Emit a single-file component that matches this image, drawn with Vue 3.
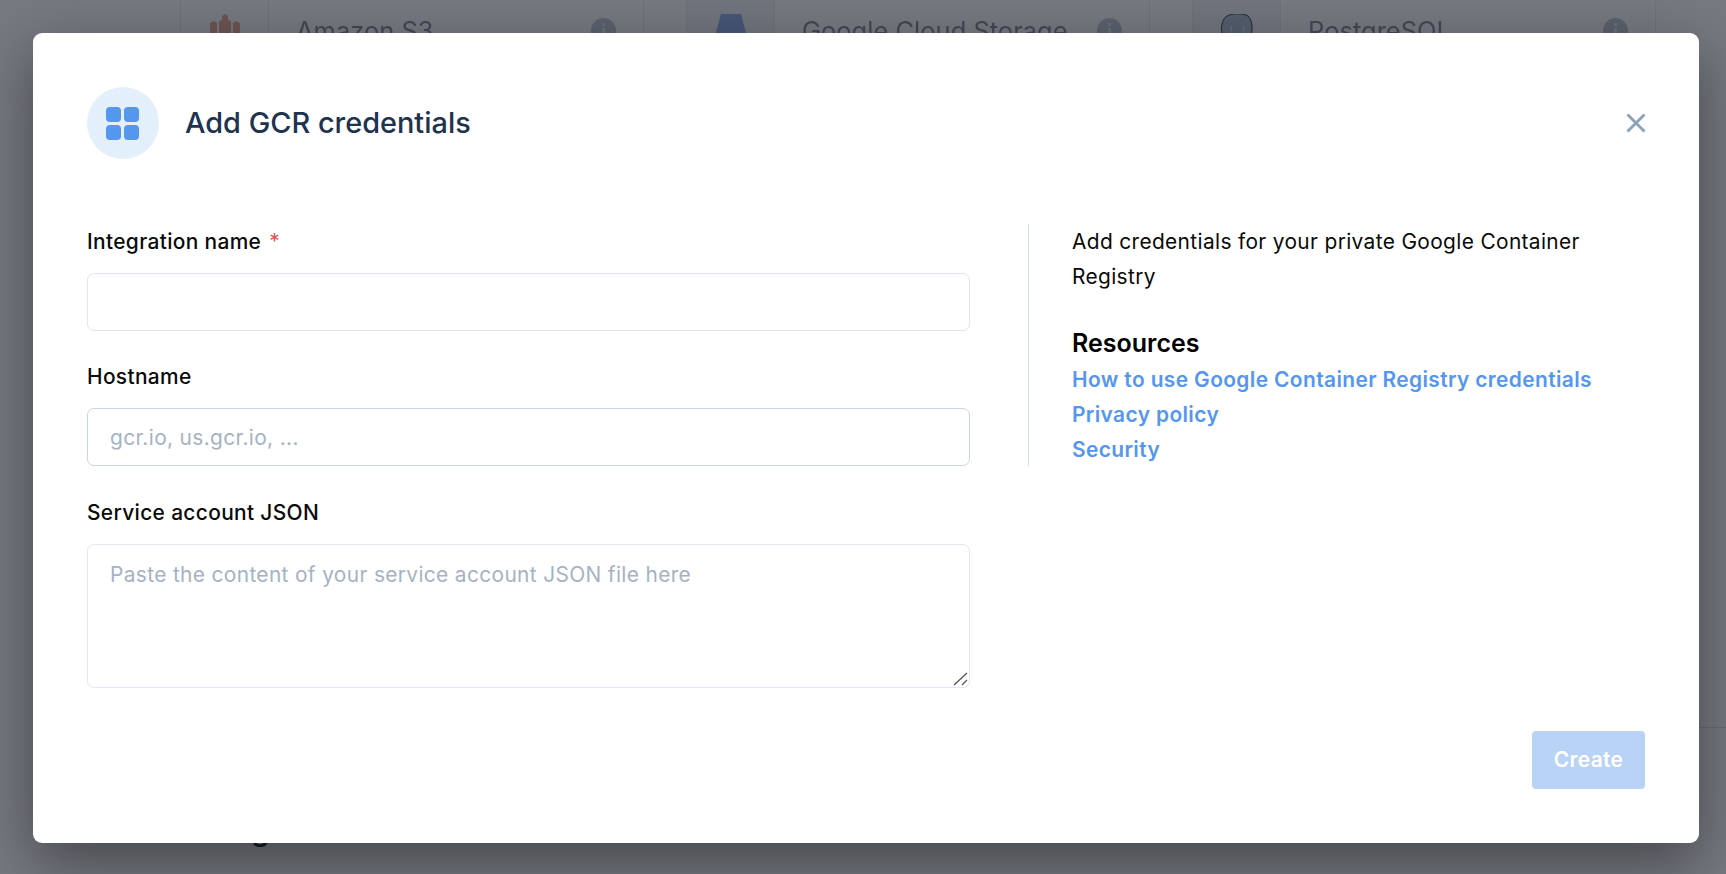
<script setup>
const cards = [
  { name: 'Amazon S3', kind: 's3' },
  { name: 'Google Cloud Storage', kind: 'gcs' },
  { name: 'PostgreSQL', kind: 'pg' }
]
</script>

<template>
  <div class="page">
    <div class="cards">
      <div v-for="c in cards" :key="c.name" class="card">
        <div class="card-icon" :class="c.kind">
          <svg v-if="c.kind === 's3'" width="30" height="44" viewBox="0 0 30 44">
            <path d="M0 9l4-2 3 2v26l-7-3zM30 9l-4-2-3 2v26l7-3zM9 7l3-1V2l3-2 3 2v4l3 1v30l-6 6-6-6z" fill="#e9a48c" />
          </svg>
          <svg v-else-if="c.kind === 'gcs'" width="36" height="44" viewBox="0 0 36 44">
            <path d="M8 0h20l8 30v14H0V30z" fill="#8aa9ea" />
            <rect x="12" y="28" width="12" height="5" rx="1" fill="#e8eefc" />
          </svg>
          <svg v-else width="36" height="44" viewBox="0 0 36 44">
            <path d="M8 2c6-3 16-3 21 0 5 4 5 16 2 24-2 6-4 14-9 14-3 0-3-4-4-8-2 4-5 6-8 3C5 30 1 18 3 10c1-4 2-6 5-8z" fill="#a9bbd0" stroke="#333" stroke-width="1" />
            <path d="M13 12c-2 6-1 12 1 18M24 12c2 6 1 12-1 16" fill="none" stroke="#eee" stroke-width="1" />
          </svg>
        </div>
        <div class="card-name">{{ c.name }}</div>
        <div class="card-info"><span class="i-dot"></span><span class="i-bar"></span></div>
      </div>
    </div>
    <div class="bg-rule"></div>
    <h2 class="bg-heading">Catalog</h2>

    <div class="overlay">
      <div class="modal">
        <header class="head">
          <div class="badge">
            <svg class="badge-icon" width="33" height="33" viewBox="0 0 33 33" fill="#5596ee">
              <rect x="0" y="0" width="15" height="15" rx="4" />
              <rect x="18" y="0" width="15" height="15" rx="4" />
              <rect x="0" y="18" width="15" height="15" rx="4" />
              <rect x="18" y="18" width="15" height="15" rx="4" />
            </svg>
          </div>
          <h1 class="title">Add GCR credentials</h1>
          <svg class="close" width="20" height="20" viewBox="0 0 20 20" fill="none" stroke="#8fa3b8" stroke-width="3" stroke-linecap="butt">
            <path d="M1.5 1.5l17 17M18.5 1.5l-17 17" />
          </svg>
        </header>

        <div class="body">
          <form class="form">
            <label class="label">Integration name <span class="req">*</span></label>
            <input class="field f1" type="text" />
            <label class="label">Hostname</label>
            <input class="field f2" type="text" placeholder="gcr.io, us.gcr.io, ..." />
            <label class="label">Service account JSON</label>
            <div class="area-wrap">
              <textarea class="field area" placeholder="Paste the content of your service account JSON file here"></textarea>
              <svg class="grip" width="15" height="14" viewBox="0 0 15 14" fill="none" stroke="#555" stroke-width="1.3">
                <path d="M1 13L14 1M9 13l5-5" />
              </svg>
            </div>
          </form>
          <aside class="side">
            <p class="intro">Add credentials for your private Google Container Registry</p>
            <h3 class="res">Resources</h3>
            <a class="link">How to use Google Container Registry credentials</a>
            <a class="link">Privacy policy</a>
            <a class="link">Security</a>
          </aside>
        </div>

        <footer class="foot">
          <button class="create" type="button" disabled>Create</button>
        </footer>
      </div>
    </div>
  </div>
</template>

<style scoped>
.page {
  position: relative;
  height: 874px;
  overflow: hidden;
  background: #fff;
  font-family: Inter, "Liberation Sans", sans-serif;
}
.cards {
  display: grid;
  grid-template-columns: repeat(3, 464px);
  gap: 42px;
  margin: -30px 0 0 180px;
  filter: blur(0.7px);
}
.card {
  display: flex;
  align-items: center;
  height: 120px;
  border: 1px solid #e8edf2;
  box-sizing: border-box;
}
.card-icon {
  width: 87px;
  align-self: stretch;
  display: flex;
  align-items: center;
  justify-content: center;
  border-right: 1px solid #e8edf2;
  flex: none;
}
.card-icon svg { margin-top: 12px; }
.card-icon.gcs,
.card-icon.pg { background: #f0f4f9; }
.card-name {
  flex: 1;
  margin-left: 27px;
  font-size: 25.5px;
  color: #7b8596;
}
.card-info {
  position: relative;
  width: 25px;
  height: 25px;
  border-radius: 50%;
  background: #bcc6d3;
  margin-right: 27px;
}
.i-dot {
  position: absolute;
  left: 11px;
  top: 5px;
  width: 3px;
  height: 3px;
  background: #e2e8f0;
}
.i-bar {
  position: absolute;
  left: 11px;
  top: 10px;
  width: 3px;
  height: 9px;
  background: #e2e8f0;
}
.bg-rule {
  margin: 637px 0 0 180px;
  border-top: 1px solid #dde3ea;
}
.bg-heading {
  margin: 85px 0 0 161px;
  font-size: 29px;
  font-weight: 600;
  color: #1a202c;
  line-height: 36px;
}
.overlay {
  position: absolute;
  inset: 0;
  box-sizing: border-box;
  padding: 33px 27px 31px 33px;
  display: flex;
  background: rgba(26, 32, 44, 0.6);
}
.modal {
  flex: 1;
  display: flex;
  flex-direction: column;
  box-sizing: border-box;
  padding: 54px;
  background: #fff;
  border-radius: 9px;
  box-shadow: 0 20px 60px rgba(0, 0, 0, 0.42);
}
.head {
  display: flex;
  align-items: center;
  height: 72px;
  flex: none;
}
.badge {
  width: 72px;
  height: 72px;
  border-radius: 50%;
  background: #e3effb;
  display: flex;
  align-items: center;
  justify-content: center;
  flex: none;
}
.badge-icon { margin: 0 1px 0 0; }
.title {
  margin: 0 0 2px 26px;
  flex: 1;
  font-size: 28.9px;
  font-weight: 450;
  color: #1e334f;
}
.close { flex: none; margin-right: -1px; }
.body {
  display: flex;
  margin-top: 65px;
}
.form {
  width: 883px;
  margin-right: 58px;
  flex: none;
  display: flex;
  flex-direction: column;
}
.label {
  font-size: 20.9px;
  letter-spacing: 0.35px;
  font-weight: 500;
  line-height: 35px;
  color: #0a0a0a;
  margin-bottom: 14px;
}
.req { color: #d9534f; font-weight: 400; margin-left: 2px; }
.field {
  box-sizing: border-box;
  width: 100%;
  height: 58px;
  padding: 0 22px;
  margin: 0 0 28px;
  font: 400 20.9px Inter, sans-serif;
  letter-spacing: 0.35px;
  border: 1px solid #dfe5ee;
  border-radius: 7px;
  background: #fff;
  outline: none;
}
.f2 { border-color: #cbd5e0; margin-bottom: 29px; }
.field::placeholder { color: #a6b2c3; opacity: 1; }
.area-wrap {
  position: relative;
  height: 144px;
}
.area {
  display: block;
  height: 144px;
  margin: 0;
  padding: 15px 22px;
  line-height: 30px;
  border-color: #e2e8f0;
  resize: none;
}
.grip {
  position: absolute;
  right: 2px;
  bottom: 2px;
}
.side {
  align-self: flex-start;
  height: 242px;
  box-sizing: border-box;
  flex: 1;
  border-left: 1px solid #d5dde7;
  padding-left: 43px;
  display: flex;
  flex-direction: column;
  align-items: flex-start;
}
.intro {
  margin: 0;
  font-size: 20.9px;
  letter-spacing: 0.35px;
  line-height: 35px;
  color: #0a0a0a;
}
.res {
  margin: 30px 0 0;
  font-size: 25px;
  font-weight: 600;
  line-height: 38px;
  color: #000;
}
.link {
  font-size: 20.9px;
  letter-spacing: 0.39px;
  font-weight: 600;
  line-height: 35px;
  color: #5596ee;
}
.foot {
  margin-top: auto;
  display: flex;
  justify-content: flex-end;
}
.create {
  width: 113px;
  height: 58px;
  padding: 0 0 2px;
  border: 0;
  border-radius: 4px;
  background: #b9d3f6;
  color: #fff;
  font: 600 20.9px Inter, sans-serif;
  letter-spacing: 0.35px;
}
</style>

<style>
html, body { margin: 0; overflow: hidden; }
</style>
